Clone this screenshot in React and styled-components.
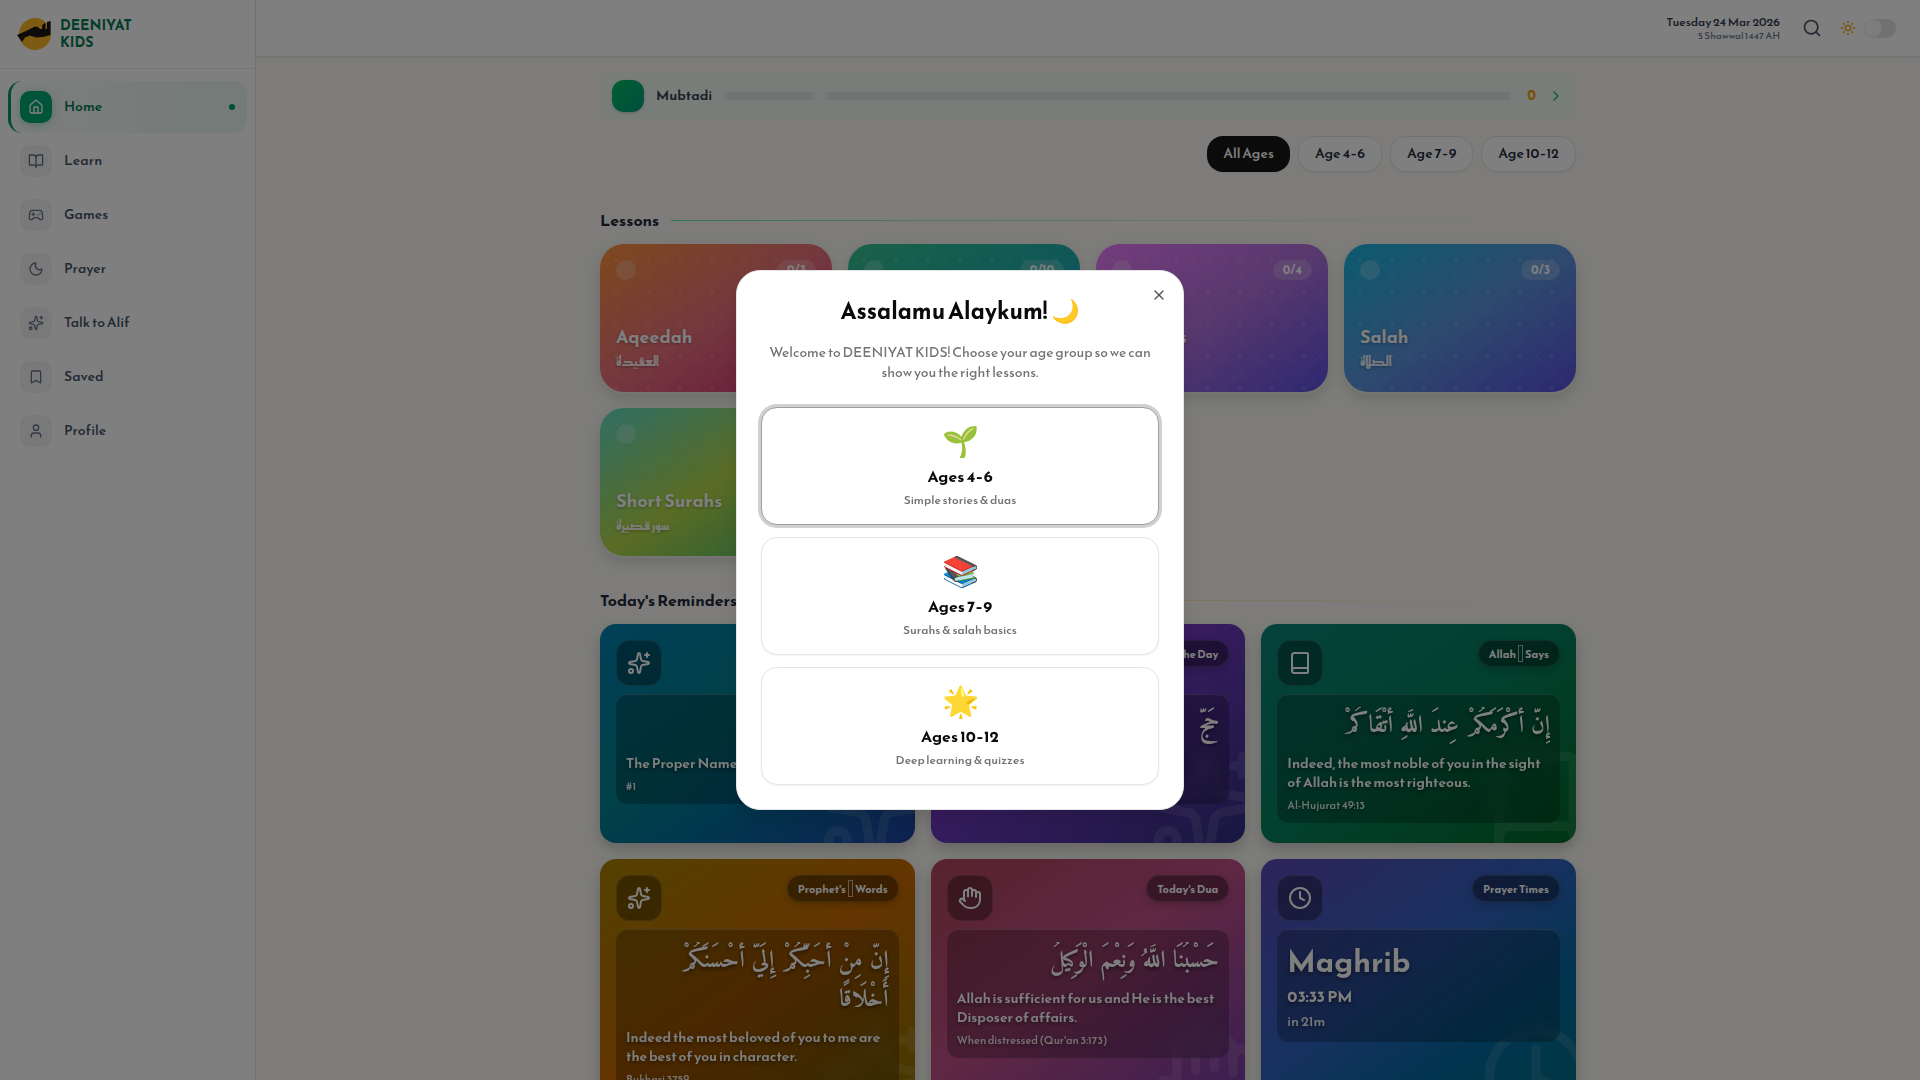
import React from 'react';
import styled, { createGlobalStyle } from 'styled-components';
import {
  House, BookOpen, Gamepad2, Moon, Sparkles, Bookmark, User, Search, Sun, ChevronRight,
  Book, Hand, Clock, X,
} from 'lucide-react';

const navItems = [
  { label: 'Home', icon: House, active: true },
  { label: 'Learn', icon: BookOpen },
  { label: 'Games', icon: Gamepad2 },
  { label: 'Prayer', icon: Moon },
  { label: 'Talk to Alif', icon: Sparkles },
  { label: 'Saved', icon: Bookmark },
  { label: 'Profile', icon: User },
];

const ageFilters = ['All Ages', 'Age 4–6', 'Age 7–9', 'Age 10–12'];

const lessons = [
  { title: 'Aqeedah', arabic: 'العقيدة', count: '0/3', colors: '#fb923c, #e8707c 50%, #d02c78' },
  { title: 'Seerah', arabic: 'السيرة', count: '0/10', colors: '#34c38f, #1fb0ae 50%, #0e9ad0' },
  { title: 'Manners', arabic: 'الأخلاق', count: '0/4', colors: '#e879f9, #b070dc 50%, #5b50e0' },
  { title: 'Salah', arabic: 'الصلاة', count: '0/3', colors: '#16b4dc, #5a94dc 50%, #5b50e0' },
  { title: 'Short Surahs', arabic: 'سور قصيرة', count: '0/5', colors: '#5eddc8, #b4d848 50%, #3fb870' },
];

const reminders = [
  {
    icon: Sparkles, chip: ['Name of Allah'], arabic: 'ٱللَّه', text: 'The Proper Name', source: '#1', colors: '#0280b0, #00828e 42%, #00709c 62%, #1e40a0',
  },
  {
    icon: Sparkles, chip: ['Word of the Day'], arabic: 'حَجّ', text: 'Pilgrimage', source: 'Hajj', colors: '#a02bd8, #6838b8 50%, #312e81',
  },
  {
    icon: Book, chip: ['Allah', 'Says'], arabic: 'إِنَّ أَكْرَمَكُمْ عِندَ اللَّهِ أَتْقَاكُمْ', text: 'Indeed, the most noble of you in the sight of Allah is the most righteous.', source: 'Al-Hujurat 49:13', colors: '#08847a, #05805c 50%, #006a26',
  },
  {
    icon: Sparkles, chip: ["Prophet's", 'Words'], arabic: 'إِنَّ مِنْ أَحَبِّكُمْ إِلَيَّ أَحْسَنَكُمْ أَخْلَاقًا', text: 'Indeed the most beloved of you to me are the best of you in character.', source: 'Bukhari 3759', colors: '#a88200, #c96a00 50%, #857000',
  },
  {
    icon: Hand, chip: ["Today's Dua"], arabic: 'حَسْبُنَا اللَّهُ وَنِعْمَ الْوَكِيلُ', text: 'Allah is sufficient for us and He is the best Disposer of affairs.', source: "When distressed (Qur'an 3:173)", colors: '#b0455a, #c04f86 45%, #6d3aa8',
  },
  {
    icon: Clock, chip: ['Prayer Times'], prayer: { name: 'Maghrib', time: '03:33 PM', left: 'in 21m' }, colors: '#5b48b8, #2f63c0 45%, #0369a1 70%, #007080',
  },
];

const ageOptions = [
  { emoji: '🌱', label: 'Ages 4–6', note: 'Simple stories & duas', selected: true },
  { emoji: '📚', label: 'Ages 7–9', note: 'Surahs & salah basics' },
  { emoji: '🌟', label: 'Ages 10–12', note: 'Deep learning & quizzes' },
];

function Logo() {
  return (
    <svg width="36" height="36" viewBox="0 0 36 36" aria-hidden="true">
      <circle cx="19" cy="18" r="16" fill="#fbb724" />
      <path d="M1 19 L10 15 L15 12.500 L19 10.500 L22 11 L24 13 L26 13 L26.500 8.500 L29.500 7 L29.500 13 L31 13 L31 6 L34.700 5 L34.500 19 L27 21 L20 21.500 L14 19.500 L9 21.500 L6 26 Z" fill="#1c1917" />
    </svg>
  );
}

function CardPattern({ id }) {
  return (
    <PatternSvg aria-hidden="true">
      <defs>
        <pattern id={id} width="32" height="32" patternUnits="userSpaceOnUse">
          <path d="M16 0 L32 16 L16 32 L0 16 Z" fill="none" stroke="#fff" strokeOpacity="0.08" />
          <circle cx="16" cy="16" r="2" fill="#fff" fillOpacity="0.1" />
        </pattern>
      </defs>
      <rect width="100%" height="100%" fill={`url(#${id})`} />
    </PatternSvg>
  );
}

function Reminder({ item }) {
  const Icon = item.icon;
  return (
    <ReminderCard $colors={item.colors}>
      <Watermark><Icon size={112} /></Watermark>
      <ReminderTop>
        <ReminderIcon><Icon size={24} /></ReminderIcon>
        <Chip>
          {item.chip[0]}
          {item.chip[1] && <EmptyGlyph />}
          {item.chip[1]}
        </Chip>
      </ReminderTop>
      {item.prayer ? (
        <ReminderBody>
          <PrayerName>{item.prayer.name}</PrayerName>
          <PrayerTime>{item.prayer.time}</PrayerTime>
          <PrayerLeft>{item.prayer.left}</PrayerLeft>
        </ReminderBody>
      ) : (
        <ReminderBody>
          <Arabic dir="rtl" lang="ar">{item.arabic}</Arabic>
          <ReminderText>{item.text}</ReminderText>
          <Source>{item.source}</Source>
        </ReminderBody>
      )}
    </ReminderCard>
  );
}

export default function App() {
  return (
    <>
      <GlobalStyle />
      <Shell>
        <Sidebar>
          <Brand href="#home">
            <Logo />
            <span>
              DEENIYAT
              <br />
              KIDS
            </span>
          </Brand>
          <Nav>
            {navItems.map(({ label, icon: Icon, active }) => (
              <NavLink key={label} href={`#${label}`} $active={active}>
                <NavIcon $active={active}><Icon size={16} /></NavIcon>
                {label}
                {active && <NavDot />}
              </NavLink>
            ))}
          </Nav>
        </Sidebar>
        <Page>
          <Header>
            <Dates>
              <Today>Tuesday 24 Mar 2026</Today>
              <Hijri>5 Shawwal 1447 AH</Hijri>
            </Dates>
            <IconButton type="button" aria-label="Search"><Search size={20} /></IconButton>
            <ThemeLabel>
              <Sun size={16} />
              <Toggle type="checkbox" role="switch" aria-label="Dark mode" />
            </ThemeLabel>
          </Header>
          <Main>
            <Level>
              <LevelBadge />
              <LevelName>Mubtadi</LevelName>
              <Track />
              <Points>0</Points>
              <ChevronRight size={16} color="#10b981" />
            </Level>
            <Filters>
              {ageFilters.map((label, i) => (
                <FilterButton key={label} type="button" $active={i === 0}>{label}</FilterButton>
              ))}
            </Filters>
            <SectionHead>
              <SectionTitle>Lessons</SectionTitle>
              <Rule $color="#6ee7b7" />
            </SectionHead>
            <LessonGrid>
              {lessons.map((lesson, i) => (
                <LessonCard key={lesson.title} href="#lesson" $colors={lesson.colors}>
                  <CardPattern id={`pattern-${i}`} />
                  <LessonTop>
                    <Bubble />
                    <Count>{lesson.count}</Count>
                  </LessonTop>
                  <LessonText>
                    <LessonTitle>{lesson.title}</LessonTitle>
                    <LessonArabic lang="ar">{lesson.arabic}</LessonArabic>
                  </LessonText>
                </LessonCard>
              ))}
            </LessonGrid>
            <SectionHead>
              <SectionTitle>Today&apos;s Reminders</SectionTitle>
              <Rule $color="#fcd34d" />
            </SectionHead>
            <ReminderGrid>
              {reminders.map((item) => <Reminder key={item.chip[0]} item={item} />)}
            </ReminderGrid>
          </Main>
        </Page>
      </Shell>
      <Overlay>
        <Dialog role="dialog" aria-modal="true" aria-labelledby="welcome-title">
          <CloseButton type="button" aria-label="Close"><X size={16} /></CloseButton>
          <DialogTitle id="welcome-title">Assalamu Alaykum! 🌙</DialogTitle>
          <DialogText>
            Welcome to DEENIYAT KIDS! Choose your age group so we can show you the right lessons.
          </DialogText>
          <Options>
            {ageOptions.map((option) => (
              <OptionButton key={option.label} type="button" $selected={option.selected}>
                <Emoji>{option.emoji}</Emoji>
                <OptionLabel>{option.label}</OptionLabel>
                <OptionNote>{option.note}</OptionNote>
              </OptionButton>
            ))}
          </Options>
        </Dialog>
      </Overlay>
    </>
  );
}

const GlobalStyle = createGlobalStyle`
  * {
    box-sizing: border-box;
  }
  body {
    margin: 0;
    background: #faf9f4;
    color: #1e293b;
    font-family: 'Reem Kufi', Lato, 'Noto Sans', sans-serif;
    font-size: 14px;
    line-height: 20px;
  }
  button {
    font: inherit;
    color: inherit;
    cursor: pointer;
  }
  a {
    color: inherit;
    text-decoration: none;
  }
  h1, h2, h3, p {
    margin: 0;
  }
`;

const Shell = styled.div`
  display: flex;
  height: 100vh;
  overflow: hidden;
`;

const Sidebar = styled.aside`
  flex: none;
  width: 256px;
  background: #fff;
  border-right: 1px solid #e7e5e4;
`;

const Brand = styled.a`
  display: flex;
  align-items: center;
  gap: 8px;
  padding: 16px;
  border-bottom: 1px solid #ededed;
  color: #047857;
  font-size: 14px;
  font-weight: 700;
  line-height: 17px;
  svg {
    flex: none;
  }
`;

const Nav = styled.nav`
  display: flex;
  flex-direction: column;
  gap: 2px;
  padding: 12px 8px;
`;

const NavLink = styled.a`
  display: flex;
  align-items: center;
  gap: 12px;
  height: 52px;
  padding: 0 12px 0 9px;
  border-left: 3px solid ${(props) => (props.$active ? '#059669' : 'transparent')};
  border-radius: 14px;
  background: ${(props) => (props.$active ? 'linear-gradient(90deg, #f8fcfa, #e8f6f0)' : 'none')};
  color: ${(props) => (props.$active ? '#047857' : '#475569')};
  font-weight: 500;
`;

const NavIcon = styled.span`
  display: grid;
  place-items: center;
  width: 32px;
  height: 32px;
  border-radius: 10px;
  background: ${(props) => (props.$active ? '#00a874' : '#f3f3f3')};
  color: ${(props) => (props.$active ? '#fff' : '#64748b')};
  box-shadow: ${(props) => (props.$active ? '0 2px 10px rgba(5, 150, 105, 0.3)' : 'none')};
`;

const NavDot = styled.span`
  width: 6px;
  height: 6px;
  margin-left: auto;
  border-radius: 50%;
  background: #00a070;
`;

const Page = styled.div`
  flex: 1;
  min-width: 0;
  display: flex;
  flex-direction: column;
`;

const Header = styled.header`
  flex: none;
  display: flex;
  align-items: center;
  justify-content: flex-end;
  height: 57px;
  padding: 0 24px;
  background: #fff;
  border-bottom: 1px solid #e2e2ea;
  box-shadow: 0 1px 2px rgba(0, 0, 0, 0.08);
`;

const Dates = styled.div`
  margin-right: 16px;
  text-align: right;
`;

const Today = styled.div`
  color: #334155;
  font-size: 12px;
  font-weight: 500;
  line-height: 16px;
`;

const Hijri = styled.div`
  color: #64748b;
  font-size: 10px;
  line-height: 12px;
`;

const IconButton = styled.button`
  display: grid;
  place-items: center;
  width: 32px;
  height: 32px;
  padding: 0;
  border: 0;
  background: none;
  color: #475569;
`;

const ThemeLabel = styled.label`
  display: flex;
  align-items: center;
  gap: 8px;
  margin-left: 12px;
  color: #f59e0b;
`;

const Toggle = styled.input`
  appearance: none;
  width: 32px;
  height: 18px;
  margin: 0;
  border-radius: 9px;
  background: radial-gradient(circle at 9px 9px, #fafafa 8px, #e2e2e2 9px);
  box-shadow: 0 1px 2px rgba(0, 0, 0, 0.1);
`;

const Main = styled.main`
  flex: 1;
  min-height: 0;
  overflow-y: auto;
  scrollbar-width: none;
  width: 100%;
  max-width: 1024px;
  margin: 0 auto;
  padding: 15px 24px 32px;
`;

const Level = styled.section`
  display: flex;
  align-items: center;
  gap: 12px;
  height: 48px;
  padding: 0 12px;
  border-radius: 16px;
  background: #f0faf3;
`;

const LevelBadge = styled.span`
  width: 32px;
  height: 32px;
  border-radius: 12px;
  background: linear-gradient(135deg, #00c060, #009c80);
  box-shadow: 0 1px 3px rgba(0, 0, 0, 0.2);
`;

const LevelName = styled.span`
  color: #334155;
  font-weight: 600;
`;

const Track = styled.span`
  flex: 1;
  height: 8px;
  border-radius: 4px;
  background: linear-gradient(90deg, #e2e8e6 86px, #f0f6f5 93px, #f0f6f5 99px, #e2e8e6 106px);
`;

const Points = styled.span`
  margin-left: 4px;
  color: #f59e0b;
  font-size: 14px;
  font-weight: 700;
`;

const Filters = styled.div`
  display: flex;
  justify-content: flex-end;
  gap: 8px;
  padding: 16px 0 4px;
`;

const FilterButton = styled.button`
  height: 36px;
  padding: 0 16px;
  border: ${(props) => (props.$active ? '0' : '1px solid #e5e5e5')};
  border-radius: 16px;
  background: ${(props) => (props.$active ? '#171717' : '#fff')};
  color: ${(props) => (props.$active ? '#fff' : '#1e293b')};
  font-weight: 500;
  box-shadow: 0 1px 2px rgba(0, 0, 0, 0.06);
`;

const SectionHead = styled.div`
  display: flex;
  align-items: center;
  gap: 12px;
  margin: 32px 0 12px;
`;

const SectionTitle = styled.h2`
  color: #1e293b;
  font-size: 16px;
  font-weight: 700;
  line-height: 24px;
`;

const Rule = styled.span`
  flex: 1;
  height: 1px;
  background: linear-gradient(90deg, ${(props) => props.$color}, transparent 90%);
`;

const LessonGrid = styled.div`
  display: grid;
  grid-template-columns: repeat(4, 1fr);
  gap: 16px;
`;

const LessonCard = styled.a`
  position: relative;
  display: flex;
  flex-direction: column;
  justify-content: space-between;
  height: 148px;
  padding: 16px 16px 20px;
  overflow: hidden;
  border-radius: 24px;
  background: linear-gradient(to bottom right, ${(props) => props.$colors});
  color: #fff;
  box-shadow: 0 2px 0 rgba(255, 255, 255, 0.4), 0 6px 16px rgba(0, 0, 0, 0.15);
`;

const PatternSvg = styled.svg`
  position: absolute;
  inset: 0;
  width: 100%;
  height: 100%;
`;

const LessonTop = styled.div`
  display: flex;
  justify-content: space-between;
`;

const Bubble = styled.span`
  width: 20px;
  height: 20px;
  border-radius: 50%;
  background: rgba(255, 255, 255, 0.22);
`;

const Count = styled.span`
  padding: 0 10px;
  border-radius: 10px;
  background: rgba(255, 255, 255, 0.2);
  font-size: 12px;
  font-weight: 700;
`;

const LessonText = styled.div`
  text-shadow: 0 1px 3px rgba(0, 0, 0, 0.3);
`;

const LessonTitle = styled.h3`
  font-size: 18px;
  font-weight: 700;
  line-height: 24px;
`;

const LessonArabic = styled.p`
  margin-top: 3px;
  opacity: 0.85;
  font-size: 14px;
  font-weight: 700;
`;

const ReminderGrid = styled.div`
  display: grid;
  grid-template-columns: repeat(3, 1fr);
  gap: 16px;
`;

const ReminderCard = styled.article`
  position: relative;
  padding: 16px 16px 20px;
  overflow: hidden;
  border-radius: 16px;
  background: linear-gradient(145deg, ${(props) => props.$colors});
  color: #fff;
  box-shadow: 0 6px 14px rgba(0, 0, 0, 0.2);
`;

const Watermark = styled.span`
  position: absolute;
  right: -16px;
  bottom: -16px;
  height: 112px;
  opacity: 0.1;
`;

const ReminderTop = styled.div`
  display: flex;
  align-items: flex-start;
  justify-content: space-between;
  margin-bottom: 8px;
`;

const ReminderIcon = styled.span`
  display: grid;
  place-items: center;
  width: 46px;
  height: 46px;
  border: 1px solid rgba(255, 255, 255, 0.12);
  border-radius: 14px;
  background: rgba(0, 0, 0, 0.35);
`;

const Chip = styled.span`
  display: flex;
  align-items: center;
  height: 27px;
  padding: 0 10px;
  border: 1px solid rgba(255, 255, 255, 0.12);
  border-radius: 14px;
  background: rgba(0, 0, 0, 0.42);
  box-shadow: 0 3px 8px rgba(0, 0, 0, 0.2);
  font-size: 11px;
  font-weight: 700;
`;

const EmptyGlyph = styled.span`
  width: 5px;
  height: 17px;
  margin: 0 2px;
  border: 1px solid rgba(255, 255, 255, 0.6);
`;

const ReminderBody = styled.div`
  position: relative;
  padding: 12px 10px 10px;
  border-top: 1px solid rgba(255, 255, 255, 0.2);
  border-radius: 12px;
  background: rgba(0, 0, 0, 0.25);
  backdrop-filter: blur(8px);
  text-shadow: 0 2px 4px rgba(0, 0, 0, 0.5);
`;

const Arabic = styled.p`
  margin-bottom: 8px;
  overflow: hidden;
  font-family: Amiri, 'Noto Naskh Arabic', 'DejaVu Sans', serif;
  font-size: 24px;
  font-weight: 700;
  line-height: 39px;
`;

const ReminderText = styled.p`
  font-size: 14px;
  font-weight: 600;
  line-height: 19px;
`;

const Source = styled.p`
  margin-top: 5px;
  opacity: 0.85;
  font-size: 11px;
  font-weight: 500;
  line-height: 16px;
`;

const PrayerName = styled.p`
  font-size: 30px;
  font-weight: 700;
  line-height: 40px;
`;

const PrayerTime = styled.p`
  font-size: 16px;
  font-weight: 700;
  line-height: 28px;
`;

const PrayerLeft = styled.p`
  margin-top: 2px;
  opacity: 0.9;
  font-size: 14px;
  font-weight: 500;
`;

const Overlay = styled.div`
  position: fixed;
  inset: 0;
  display: grid;
  place-items: center;
  background: rgba(0, 0, 0, 0.5);
`;

const Dialog = styled.div`
  position: relative;
  width: 100%;
  max-width: 448px;
  padding: 24px;
  border: 1px solid #e5e5e5;
  border-radius: 24px;
  background: #fff;
  color: #0a0a0a;
  text-align: center;
  box-shadow: 0 10px 15px rgba(0, 0, 0, 0.1);
`;

const CloseButton = styled.button`
  position: absolute;
  top: 16px;
  right: 16px;
  display: flex;
  padding: 0;
  border: 0;
  background: none;
  opacity: 0.7;
`;

const DialogTitle = styled.h1`
  font-size: 23px;
  font-weight: 700;
  line-height: 32px;
`;

const DialogText = styled.p`
  margin: 16px 0 24px;
  color: #737373;
`;

const Options = styled.div`
  display: flex;
  flex-direction: column;
  gap: 12px;
`;

const OptionButton = styled.button`
  display: flex;
  flex-direction: column;
  align-items: center;
  height: 118px;
  padding: 16px;
  border: 1px solid ${(props) => (props.$selected ? '#a1a1a1' : '#e5e5e5')};
  border-radius: 16px;
  background: #fff;
  box-shadow: ${(props) => (props.$selected ? '0 0 0 3px #d0d0d0' : '0 1px 2px rgba(0, 0, 0, 0.05)')};
`;

const Emoji = styled.span`
  font-size: 30px;
  line-height: 36px;
`;

const OptionLabel = styled.span`
  margin-top: 4px;
  font-size: 16px;
  font-weight: 700;
  line-height: 24px;
`;

const OptionNote = styled.span`
  margin-top: 4px;
  color: #737373;
  font-size: 12px;
  font-weight: 500;
  line-height: 16px;
`;
